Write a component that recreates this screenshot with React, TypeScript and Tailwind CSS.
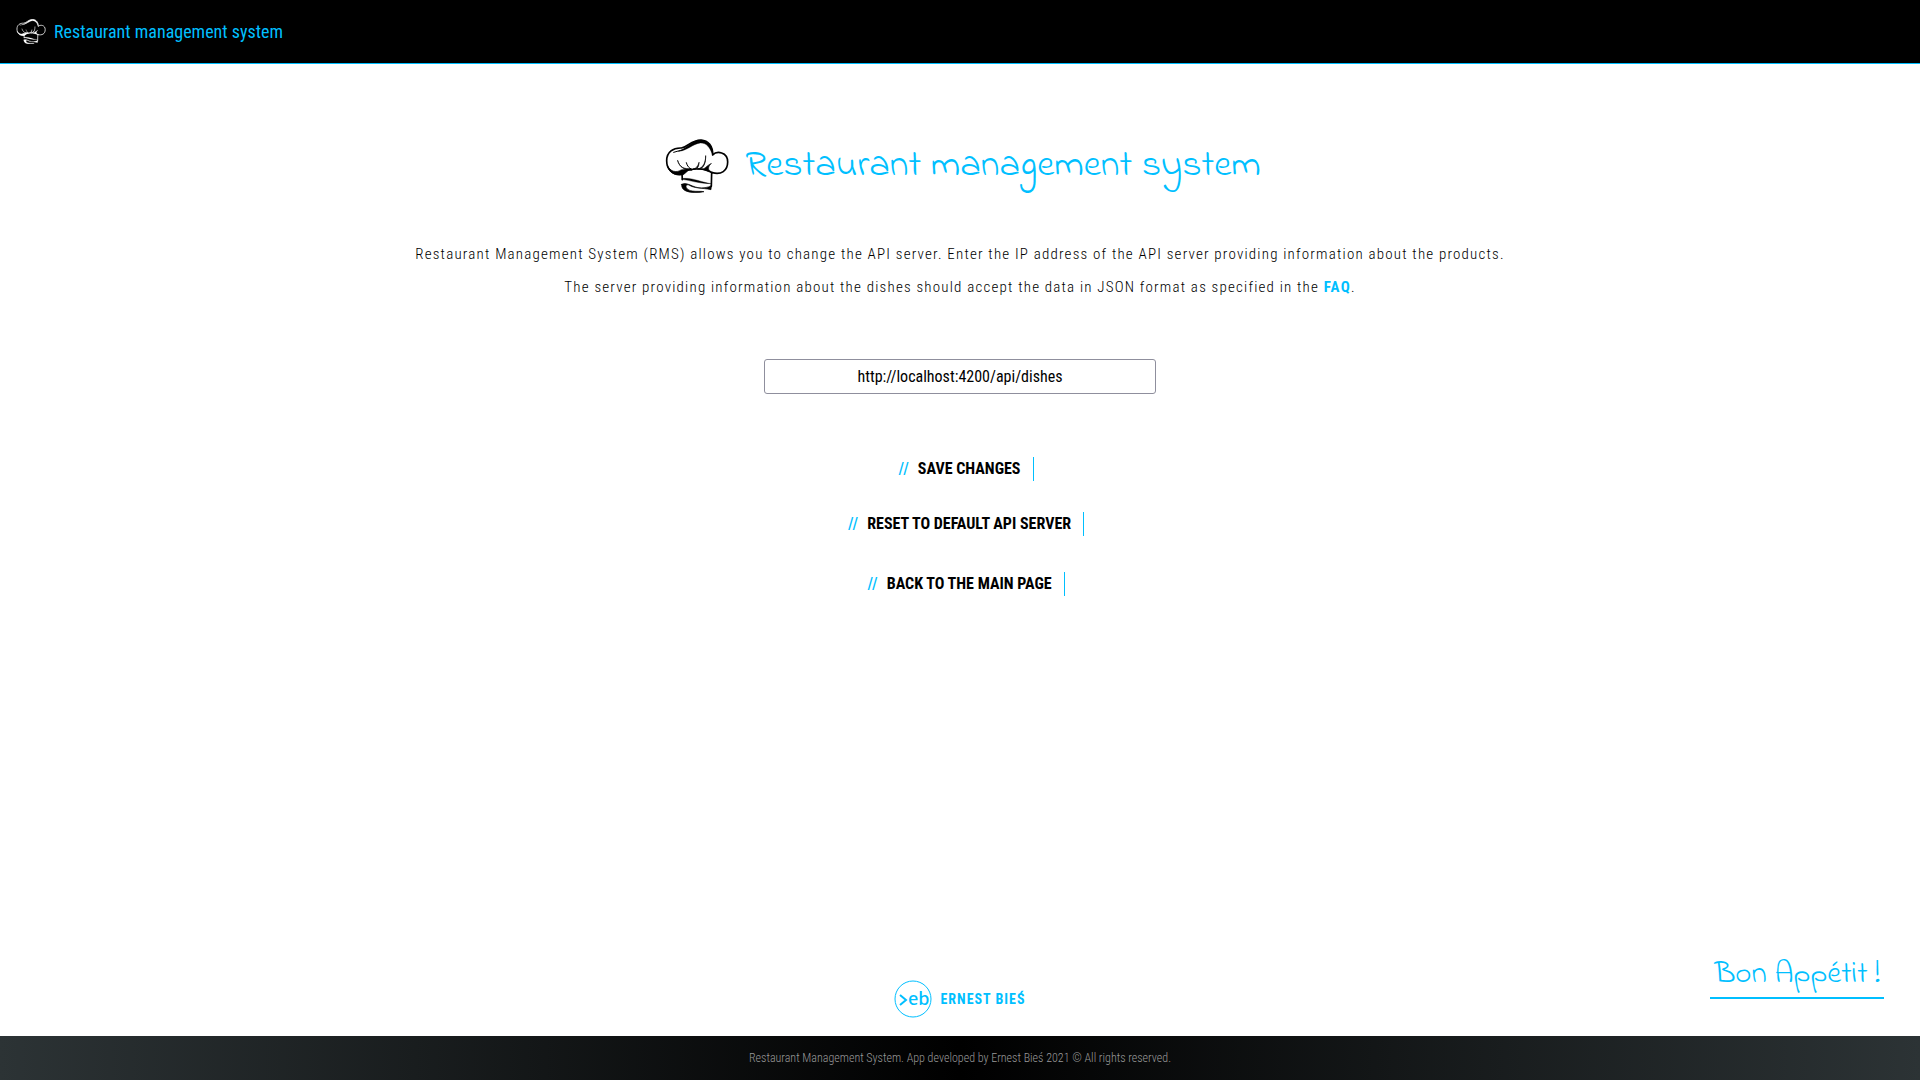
import React from "react";

function ChefHat({ className }: { className: string }) {
  return (
    <svg viewBox="20 28 190 162" className={className} fill="none" stroke="currentColor" strokeLinecap="round" strokeLinejoin="round" aria-hidden="true">
      <path strokeWidth="5" d="M70 133C40 137 24 117 24 93C24 66 44 54 68 55C88 52 98 31 127 31C149 32 163 50 162 76C174 63 207 66 207 97C207 124 187 136 161 129" />
      <path strokeWidth="5" d="M68 132C84 116 137 112 161 129M70 132L71 150M159 128L158 170" />
      <path fill="currentColor" strokeWidth="2" d="M26 108C35 126 53 130 67 121C76 118 88 121 96 117C87 123 82 129 74 135C49 141 30 127 26 108Z" />
      <path fill="currentColor" strokeWidth="1" d="M60 65C85 64 101 43 125 40C143 39 154 53 162 77C164 51 146 29 121 31C98 34 91 52 60 65Z" />
      <path fill="currentColor" strokeWidth="2" d="M57 93C64 114 75 118 97 117L100 122C78 121 62 113 57 93Z" />
      <path fill="currentColor" strokeWidth="2" d="M141 79C141 99 134 115 116 118C130 121 142 107 141 79ZM121 99C118 110 112 117 103 118C114 122 121 112 121 99ZM157 102C143 108 138 120 129 118L158 129C147 121 147 111 157 102Z" />
      <path strokeWidth="3" d="M83 99C86 110 91 115 99 119M45 68C59 63 74 62 85 54" />
      <path fill="currentColor" strokeWidth="1" d="M70 147C94 141 129 158 157 162C125 163 94 152 70 149Z" />
      <path fill="currentColor" strokeWidth="2" d="M69 164C84 156 94 169 118 174C132 176 147 174 158 168L157 180C129 174 107 177 91 166C77 162 79 181 101 184C111 186 126 184 136 186C105 192 66 189 69 164Z" />
    </svg>
  );
}

const actionText =
  "flex items-center font-bold uppercase leading-6 text-black hover:text-[#00bfff]";

function ActionContent({ label }: { label: string }) {
  return (
    <>
      <span className="font-medium tracking-[1px] text-[#00bfff]" aria-hidden="true">{"//"}</span>
      <span className="ml-2 border-r border-[#00bfff] pr-3">{label}</span>
    </>
  );
}

export default function App() {
  return (
    <div className="flex min-h-screen flex-col bg-white font-['Roboto_Condensed','Roboto',sans-serif] text-base text-black">
      <header className="flex h-16 items-center border-b border-[#00bfff] bg-black px-4">
        <a href="/" className="flex items-center gap-2 text-lg text-[#00bfff]">
          <ChefHat className="h-[25px] w-[30px] text-white" />
          Restaurant management system
        </a>
      </header>

      <main className="flex grow flex-col items-center px-4 pt-[75px]">
        <h1 className="flex items-center gap-4 pl-1.5 text-[#00bfff]">
          <ChefHat className="h-[54px] w-[64px] text-black" />
          <span className="font-['Indie_Flower',cursive] text-[38px] leading-[54px]">Restaurant management system</span>
        </h1>

        <p className="mt-[45px] text-center text-[15px] font-light leading-[33px] tracking-[0.08em]">
          Restaurant Management System (RMS) allows you to change the API server. Enter the IP address of the API server providing information about the products.
          <br />
          The server providing information about the dishes should accept the data in JSON format as specified in the{" "}
          <a href="#faq" className="font-bold text-[#00bfff]">FAQ</a>.
        </p>

        <form className="mt-[55px] flex w-full flex-col items-center" onSubmit={(e) => e.preventDefault()}>
          <input
            type="text"
            aria-label="API server address"
            defaultValue="http://localhost:4200/api/dishes"
            className="h-[35px] w-full max-w-[392px] rounded-[3px] border border-[#8f8f9d] bg-white text-center outline-none"
          />
          <button type="submit" className={`mt-[63px] ml-3 ${actionText}`}>
            <ActionContent label="Save changes" />
          </button>
          <button type="button" className={`mt-[31px] ml-3 ${actionText}`}>
            <ActionContent label="Reset to default API server" />
          </button>
        </form>
        <a href="/" className={`mt-9 ml-3 ${actionText}`}>
          <ActionContent label="Back to the main page" />
        </a>
      </main>

      <section className="grid grid-cols-3 items-end px-9 pb-[18px]">
        <a href="#author" className="col-start-2 flex items-center justify-self-center gap-2 text-sm font-bold uppercase tracking-[1px] text-[#00bfff]">
          <svg viewBox="0 0 38 38" className="size-[38px]" aria-hidden="true">
            <circle cx="19" cy="19" r="18" fill="none" stroke="currentColor" strokeWidth="1" />
            <path d="M6 15L12 20L6 25" fill="none" stroke="currentColor" strokeWidth="2" />
            <text x="14" y="25" fontSize="18" letterSpacing="0" fill="currentColor" className="font-['Noto_Sans',sans-serif] font-medium lowercase">eb</text>
          </svg>
          Ernest Bieś
        </a>
        <p className="mb-[19px] justify-self-end border-b-2 border-[#00bfff] px-1 font-['Indie_Flower',cursive] text-[31px] leading-[44px] text-[#00bfff]">
          Bon Appétit !
        </p>
      </section>

      <footer className="flex h-11 items-center justify-center bg-linear-to-r/srgb from-[#2c3335] via-black to-[#2c3335] text-xs font-light text-[#999]">
        Restaurant Management System. App developed by Ernest Bieś 2021 © All rights reserved.
      </footer>
    </div>
  );
}
